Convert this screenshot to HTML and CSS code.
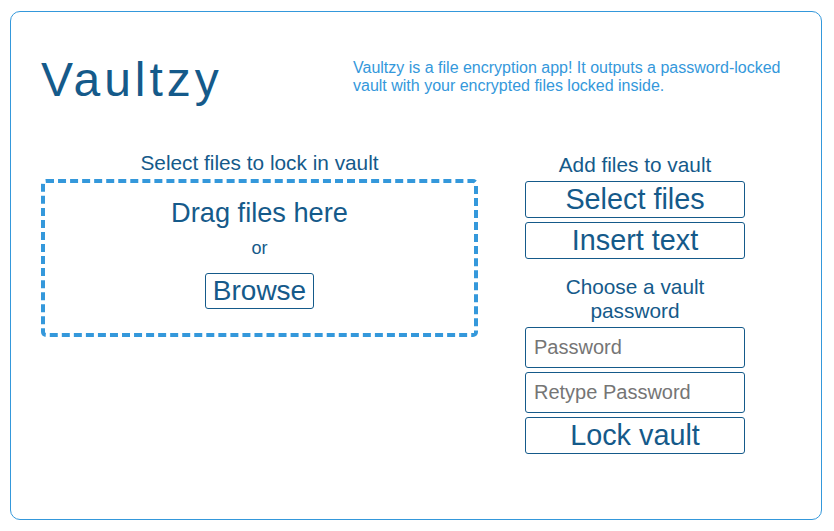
FILE: index.html
```html
<!DOCTYPE html>
<html lang="en">
<head>
<meta charset="utf-8">
<title>Vaultzy</title>
<link rel="stylesheet" href="styles.css">
</head>
<body>
<div class="app">
  <header class="header">
    <h1 class="title">Vaultzy</h1>
    <p class="intro">Vaultzy is a file encryption app! It outputs a password-locked vault with your encrypted files locked inside.</p>
  </header>
  <main class="main">
    <section class="left">
      <div class="label">Select files to lock in vault</div>
      <div class="dropzone">
        <div class="drag">Drag files here</div>
        <div class="or">or</div>
        <button class="browse">Browse</button>
      </div>
    </section>
    <section class="right">
      <div class="label">Add files to vault</div>
      <div class="stack">
        <button class="btn">Select files</button>
        <button class="btn">Insert text</button>
      </div>
      <div class="label pw-label">Choose a vault password</div>
      <div class="stack">
        <input class="field" type="password" placeholder="Password">
        <input class="field" type="password" placeholder="Retype Password">
        <button class="btn">Lock vault</button>
      </div>
    </section>
  </main>
</div>
</body>
</html>
```

FILE: styles.css
```css
* { box-sizing: border-box; }

body {
  margin: 0;
  background: #ffffff;
  font-family: "Liberation Sans", Arial, sans-serif;
  color: #155a8a;
}

.app {
  margin: 11px 0 0 10px;
  width: 812px;
  height: 509px;
  border: 1px solid #3498db;
  border-radius: 10px;
}

.header {
  display: flex;
  align-items: flex-start;
  padding: 40px 30px 0 30px;
}

.title {
  flex: 0 0 312px;
  margin: 0;
  font-size: 48px;
  font-weight: normal;
  letter-spacing: 4px;
  line-height: 55px;
  color: #155a8a;
}

.intro {
  flex: 1;
  margin: 7px 0 0 0;
  font-size: 16px;
  line-height: 18px;
  color: #3498db;
}

.main {
  display: flex;
  align-items: flex-start;
  gap: 47px;
  margin-top: 44px;
  padding: 0 30px;
}

.left { width: 437px; }

.label {
  font-size: 20.8px;
  line-height: 24px;
  text-align: center;
}

.left .label { margin-bottom: 4px; }

.dropzone {
  height: 158px;
  border: 4px dashed #3498db;
  border-radius: 5px;
  display: flex;
  flex-direction: column;
  align-items: center;
  padding-top: 14px;
}

.drag {
  font-size: 27.2px;
  line-height: 31px;
}

.or {
  margin-top: 10px;
  font-size: 18px;
  line-height: 21px;
}

.browse {
  margin-top: 14px;
  font-family: inherit;
  font-size: 28px;
  line-height: 32px;
  padding: 1px 7px;
  color: #155a8a;
  background: #ffffff;
  border: 1px solid #155a8a;
  border-radius: 3px;
}

.right {
  width: 220px;
  margin-top: 2px;
}

.stack {
  display: flex;
  flex-direction: column;
  gap: 4px;
  margin-top: 4px;
}

.pw-label { margin-top: 16px; }

.btn {
  display: flex;
  align-items: center;
  justify-content: center;
  height: 37px;
  width: 100%;
  padding: 0;
  font-family: inherit;
  font-size: 28.8px;
  line-height: 1;
  color: #155a8a;
  background: #ffffff;
  border: 1px solid #155a8a;
  border-radius: 3px;
}

.field {
  height: 41px;
  width: 100%;
  padding: 0 8px;
  font-family: inherit;
  font-size: 20px;
  color: #155a8a;
  background: #ffffff;
  border: 1px solid #155a8a;
  border-radius: 3px;
}

.field::placeholder { color: #757575; }
```
